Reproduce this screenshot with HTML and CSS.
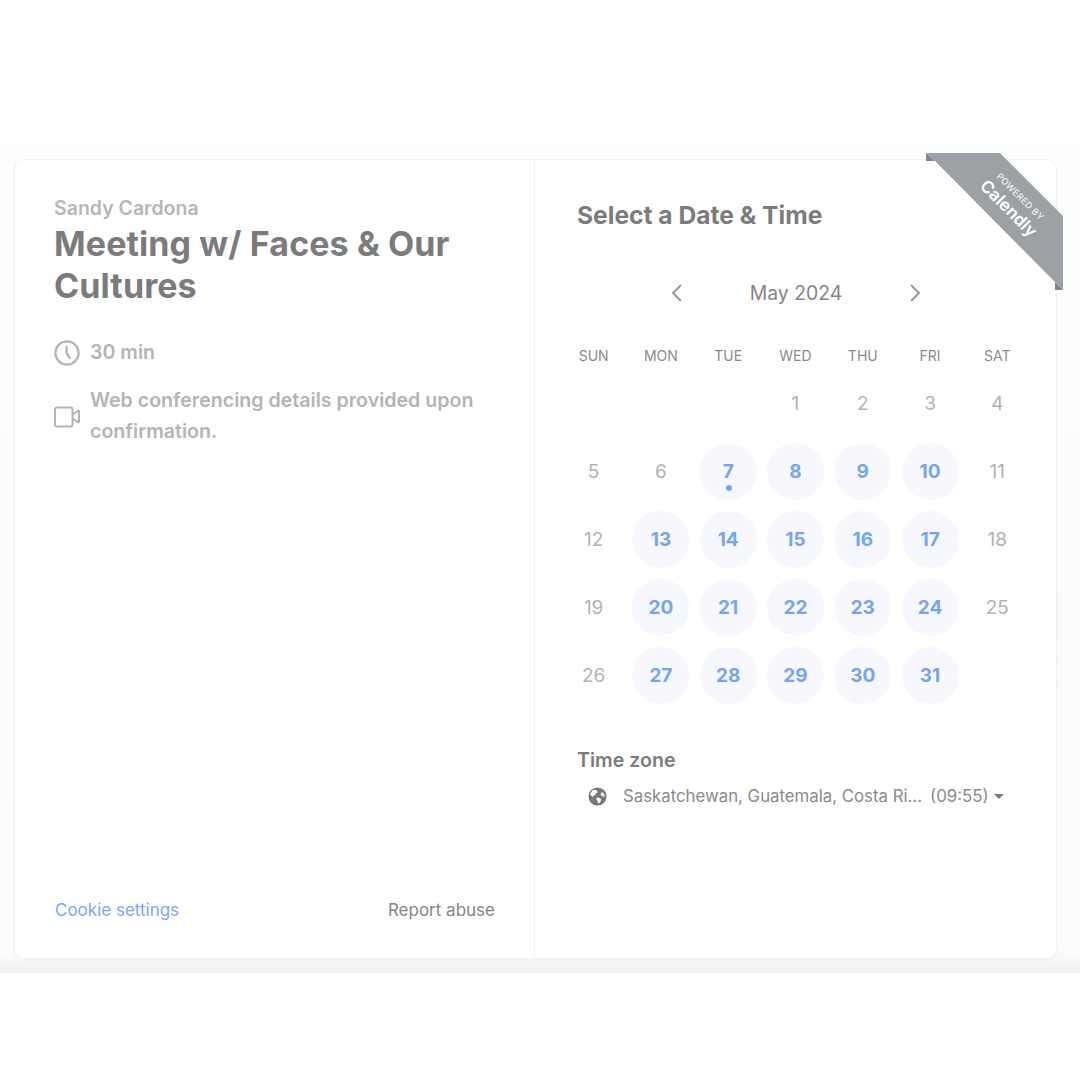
FILE: index.html
```html
<!DOCTYPE html>
<html lang="en">
  <head>
    <meta charset="UTF-8" />
    <meta name="viewport" content="width=device-width, initial-scale=1.0" />
    <title>Meeting w/ Faces &amp; Our Cultures</title>
    <link rel="stylesheet" href="styles.css">
  </head>
  <body>
    <div class="backdrop">
      <div class="card">
        <div class="details">
          <h4 class="host">Sandy Cardona</h4>
          <h1 class="event-title">Meeting w/ Faces &amp; Our Cultures</h1>
          <div class="meta meta-time">
            <svg class="meta-icon" viewBox="0 0 26 26" fill="none" stroke="#b3b3b3" stroke-width="2.2" stroke-linecap="round">
              <circle cx="13" cy="13" r="11.6" />
              <path d="M12.6 6.5v6.6l3.2 5" />
            </svg>
            <span>30 min</span>
          </div>
          <div class="meta meta-conf">
            <svg class="meta-icon" viewBox="0 0 26 26" fill="none" stroke="#b3b3b3" stroke-width="2" stroke-linejoin="round">
              <path d="M3 4.500h13.500a2 2 0 0 1 2 2v15a2 2 0 0 1-2 2H3a2 2 0 0 1-2-2v-15a2 2 0 0 1 2-2z" />
              <path d="M18.500 11.500l4.500-3a1 1 0 0 1 2 .5v9a1 1 0 0 1-2 .5l-4.500-3" />
            </svg>
            <span>Web conferencing details provided upon confirmation.</span>
          </div>
          <div class="details-footer">
            <a class="cookie-link" href="#">Cookie settings</a>
            <a class="abuse-link" href="#">Report abuse</a>
          </div>
        </div>

        <div class="picker">
          <h2 class="picker-title">Select a Date &amp; Time</h2>
          <div class="month-nav">
            <svg class="chevron" viewBox="0 0 14 20" fill="none" stroke="#9a9a9a" stroke-width="2"><path d="M11 2L3 10l8 8" /></svg>
            <span class="month-name">May 2024</span>
            <svg class="chevron" viewBox="0 0 14 20" fill="none" stroke="#9a9a9a" stroke-width="2"><path d="M3 2l8 8-8 8" /></svg>
          </div>
          <div class="weekdays">
            <span>SUN</span><span>MON</span><span>TUE</span><span>WED</span><span>THU</span><span>FRI</span><span>SAT</span>
          </div>
          <div class="days">
            <span class="day"></span><span class="day"></span><span class="day"></span>
            <span class="day">1</span><span class="day">2</span><span class="day">3</span><span class="day">4</span>
            <span class="day">5</span><span class="day">6</span>
            <span class="day open today">7</span><span class="day open">8</span><span class="day open">9</span><span class="day open">10</span>
            <span class="day">11</span><span class="day">12</span>
            <span class="day open">13</span><span class="day open">14</span><span class="day open">15</span><span class="day open">16</span><span class="day open">17</span>
            <span class="day">18</span><span class="day">19</span>
            <span class="day open">20</span><span class="day open">21</span><span class="day open">22</span><span class="day open">23</span><span class="day open">24</span>
            <span class="day">25</span><span class="day">26</span>
            <span class="day open">27</span><span class="day open">28</span><span class="day open">29</span><span class="day open">30</span><span class="day open">31</span>
          </div>
          <div class="zone">
            <h3 class="zone-label">Time zone</h3>
            <div class="zone-select">
              <svg class="globe" viewBox="0 0 20 20">
                <circle cx="10" cy="10" r="9.500" fill="#777" />
                <path fill="#fff" d="M4.500 3.800l2.500-.8 2.200.6 1 1.600-1 1.500-1.300.4-.3 1.500-1.800.4-.6 1.700L3 8.600l-.8-.9zM9.500 11l2.800.6 1.600 1.400-.6 2.200-1.700 2.200-1.200-.6-.5-2.600-1.300-1.500zM14.500 5.500l1.700.6 1.300 2.600-.3 2-1.500-1-1.800-.3-.7-2z" />
              </svg>
              <span class="zone-name">Saskatchewan, Guatemala, Costa Ri...</span>
              <span class="zone-clock">(09:55)</span>
              <span class="caret"></span>
            </div>
          </div>
        </div>

        <div class="ribbon">
          <svg class="ribbon-bg" viewBox="0 0 137 137">
            <path fill="#7f8488" d="M0 0v8h9zM129 129v8h8z" />
            <path fill="#9ca1a5" d="M0 0h74l63 63v74l-8-8L9 8z" />
          </svg>
          <div class="ribbon-text">
            <span class="ribbon-small">POWERED BY</span>
            <span class="ribbon-brand">Calendly</span>
          </div>
        </div>
      </div>
    </div>
  </body>
</html>
```

FILE: styles.css
```css
* {
  margin: 0;
  padding: 0;
  box-sizing: border-box;
}
body {
  height: 100vh;
  width: 100vw;
  overflow: hidden;
  background-color: white;
  font-family: Inter, "Open Sans", sans-serif;
  padding-top: 145px;
}
a {
  text-decoration: none;
}
.backdrop {
  height: 828px;
  padding: 14px 23px 14px 14px;
  background: linear-gradient(#fcfdfd 0%, #fbfbfc 98%, #f2f3f4 99%);
}
.card {
  position: relative;
  height: 800px;
  display: flex;
  background-color: white;
  border: 1px solid #f1f2f3;
  border-radius: 10px;
  box-shadow: 0 1px 3px rgba(0, 0, 0, 0.04);
}

/* left column */
.details {
  width: 520px;
  height: 100%;
  padding: 36px 39px 0 39px;
  display: flex;
  flex-direction: column;
  border-right: 1px solid #f1f2f3;
}
.host {
  font-size: 19.500px;
  line-height: 24px;
  font-weight: 600;
  color: #b6b6b6;
}
.event-title {
  margin-top: 3px;
  font-size: 34px;
  line-height: 42px;
  font-weight: 700;
  letter-spacing: 0.1px;
  color: #7b7b7b;
}
.meta {
  display: flex;
  align-items: center;
  gap: 10px;
  font-size: 19.600px;
  font-weight: 600;
  line-height: 31px;
  color: #b4b4b4;
}
.meta-time {
  margin-top: 30px;
}
.meta-conf {
  margin-top: 17px;
}
.meta-icon {
  width: 26px;
  height: 26px;
  flex-shrink: 0;
}
.details-footer {
  margin-top: auto;
  margin-bottom: 36px;
  padding-left: 1px;
  display: flex;
  justify-content: space-between;
  font-size: 17px;
  line-height: 24px;
}
.cookie-link {
  color: #7aa9f5;
}
.abuse-link {
  color: #858585;
}

/* right column */
.picker {
  flex: 1;
  padding: 40px 25px 0 25px;
}
.picker-title {
  padding-left: 17px;
  font-size: 24.600px;
  line-height: 30px;
  font-weight: 700;
  color: #7b7b7b;
}
.month-nav {
  margin-top: 48px;
  padding: 0 109px 0 110px;
  display: flex;
  justify-content: space-between;
  align-items: center;
  height: 30px;
}
.chevron {
  width: 14px;
  height: 20px;
}
.month-name {
  font-size: 19.400px;
  color: #858585;
}
.weekdays {
  margin-top: 38px;
  display: grid;
  grid-template-columns: repeat(7, 1fr);
  text-align: center;
  font-size: 14px;
  line-height: 20px;
  color: #8a8a8a;
}
.days {
  margin-top: 3px;
  display: grid;
  grid-template-columns: repeat(7, 1fr);
  grid-auto-rows: 68px;
  place-items: center;
}
.day {
  position: relative;
  width: 57px;
  height: 57px;
  display: flex;
  justify-content: center;
  align-items: center;
  border-radius: 50%;
  font-size: 19px;
  color: #b2b2b2;
}
.day.open {
  background-color: #f6f8fe;
  color: #74a5f3;
  font-weight: 700;
}
.day.today::after {
  content: "";
  position: absolute;
  bottom: 9px;
  left: 26px;
  width: 6px;
  height: 6px;
  border-radius: 50%;
  background-color: #74a5f3;
}
.zone {
  margin-top: 38px;
  padding-left: 17px;
}
.zone-label {
  font-size: 19.600px;
  line-height: 26px;
  font-weight: 600;
  color: #7b7b7b;
}
.zone-select {
  margin-top: 10px;
  padding-left: 11px;
  display: flex;
  align-items: center;
  height: 26px;
  font-size: 16.800px;
  color: #8a8a8a;
}
.globe {
  width: 19px;
  height: 19px;
  margin-right: 16px;
}
.zone-clock {
  margin-left: 8px;
}
.caret {
  margin-left: 5px;
  border-left: 5px solid transparent;
  border-right: 5px solid transparent;
  border-top: 5px solid #7c7c7c;
}

/* corner ribbon, hangs over the card edge */
.ribbon {
  position: absolute;
  top: -7px;
  right: -7px;
  width: 137px;
  height: 137px;
}
.ribbon-bg {
  display: block;
  width: 137px;
  height: 137px;
}
.ribbon-text {
  position: absolute;
  top: 35px;
  left: 37px;
  width: 100px;
  display: flex;
  flex-direction: column;
  align-items: center;
  transform: rotate(45deg);
  color: white;
}
.ribbon-small {
  font-size: 9px;
  line-height: 12px;
  letter-spacing: 0.3px;
}
.ribbon-brand {
  font-size: 17px;
  line-height: 20px;
  font-weight: 600;
}
```
